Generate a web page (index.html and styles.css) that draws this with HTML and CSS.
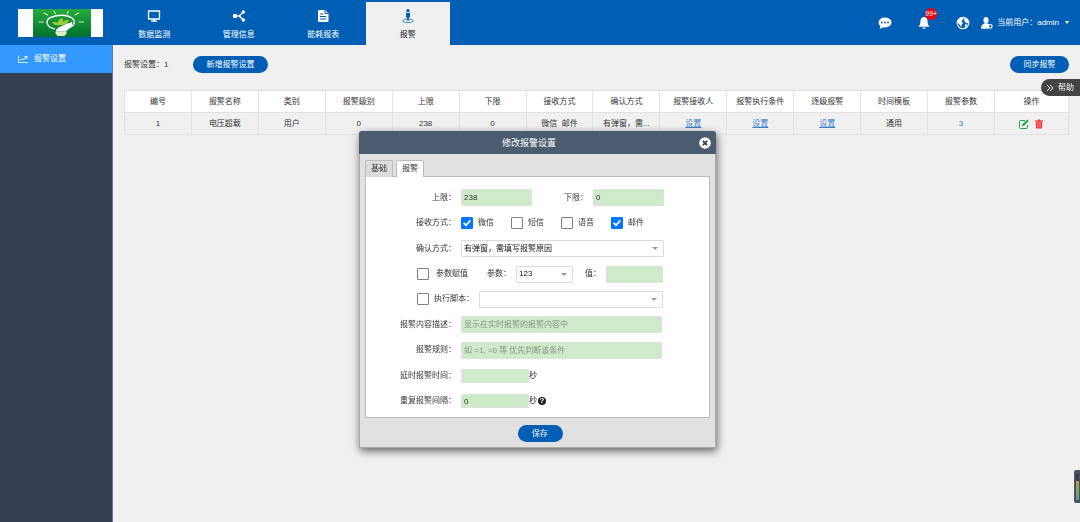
FILE: index.html
```html
<!DOCTYPE html>
<html lang="zh-CN">
<head>
<meta charset="utf-8">
<title>报警设置</title>
<link rel="stylesheet" href="styles.css">
</head>
<body>
<div class="app">
  <header class="topbar">
    <div class="brand">
      <svg class="logo" viewBox="0 0 85 28" role="img" aria-label="logo">
        <defs><linearGradient id="leafbg" x1="0" y1="0" x2="0" y2="1"><stop offset="0" stop-color="#26ac3c"/><stop offset="1" stop-color="#00702f"/></linearGradient></defs>
        <rect width="85" height="28" fill="#fff"/>
        <rect x="15" width="58" height="28" fill="url(#leafbg)"/>
        <g stroke="#d5efb8" stroke-width="1.1" stroke-linecap="round"><path d="M21 13h4.500M61 13h4.500M26 4l3.500 2M57 6l3.500-2M36 2.300l1.500 2.500M50.500 2.300l-1.500 2.500"/></g>
        <path d="M37 20C27 18 27 10 34 8c6-2.500 15-2.500 20 1 4 3 3 8-4 10" fill="none" stroke="#fff" stroke-width="1.400"/>
        <path d="M42 16c-5 1-7-1-8-3 4 0 5 0 6 1 0-3 2-4 4-5 1 2 1 3 1 4 2-2 4-2 6-2-1 3-4 5-9 5z" fill="#9fcf35"/>
        <path d="M38 22c0-2 2-3.500 5-4.500l6-3c2-.500 4-.500 5-2 1 3-1 6-4 8l-2 2H38z" fill="#fff"/>
        <path d="M37.500 22.500h11v2l-2 2.500h-7l-2-2.500z" fill="#d9f0c9"/>
      </svg>
    </div>
    <nav class="mainnav">
      <a class="navitem" href="#"><svg class="icon14" viewBox="0 0 14 14"><path d="M1.500 2h11v8h-11z" fill="none" stroke="#fff" stroke-width="1.300" stroke-linejoin="round"/><path d="M6 10h2v1.500h2v1.200H4v-1.200h2z" fill="#fff"/></svg><span>数据监测</span></a>
      <a class="navitem" href="#"><svg class="icon14" viewBox="0 0 14 14"><g fill="#fff"><circle cx="3" cy="7" r="2.200"/><circle cx="7.300" cy="7" r="1.200"/><circle cx="11.300" cy="3" r="1.700"/><circle cx="11.300" cy="11" r="1.700"/></g><path d="M3 7h4.300l4-4M7.300 7l4 4" fill="none" stroke="#fff" stroke-width="1.200"/></svg><span>管理信息</span></a>
      <a class="navitem" href="#"><svg class="icon14" viewBox="0 0 14 14"><path d="M3 1h6l3.500 3.500V12a1 1 0 0 1-1 1H3a1 1 0 0 1-1-1V2a1 1 0 0 1 1-1z" fill="#fff"/><path d="M4 5h3M4 7.500h6M4 10h6M9 1v3.500h3.500" stroke="#005eb5" fill="none"/></svg><span>能耗报表</span></a>
      <a class="navitem active" href="#"><svg class="icon14" viewBox="0 0 14 14"><circle cx="7" cy="1.800" r="1.700" fill="#005eb5"/><path d="M5 4h4v4H8.300v3.500H5.700V8H5z" fill="#005eb5"/><path d="M5 10c-5 .800-4.500 3.500 2 3.500s7-2.700 2-3.500" fill="none" stroke="#4386c5"/></svg><span>报警</span></a>
    </nav>
    <div class="tools">
      <button class="tool" aria-label="消息"><svg class="icon14" viewBox="0 0 14 14"><ellipse cx="7" cy="6.500" rx="6.500" ry="5" fill="#fff"/><path d="M3 9l-1.500 4L6 11z" fill="#fff"/><g fill="#005eb5"><circle cx="4" cy="6.500" r=".900"/><circle cx="7" cy="6.500" r=".900"/><circle cx="10" cy="6.500" r=".900"/></g></svg></button>
      <button class="tool bell" aria-label="通知"><svg class="icon14" viewBox="0 0 14 14"><path d="M7 1c2.800.300 3.600 2 3.600 4.800 0 2.500.800 3.700 2 5H1.400c1.200-1.300 2-2.300 2-5C3.400 3 4.200 1.300 7 1z" fill="#fff"/><path d="M5.500 11.400h3a1.500 1.500 0 0 1-3 0z" fill="#fff"/></svg><span class="badge">99+</span></button>
      <button class="tool" aria-label="语言"><svg class="icon14" viewBox="0 0 14 14"><circle cx="7" cy="7" r="5.800" fill="none" stroke="#fff" stroke-width="1.100"/><path d="M2 4c1-1.500 2.500-2.500 5-2.700l.8 1.200L6.500 4l-1 1.500L7 7 5.500 9v2.500L4 9 1.500 6.500zM8.500 2l3 1.500 1 3-1.500 1-2-1.500L8 4.500zM9.500 8l2 .500-1.500 3-1.500.500z" fill="#fff"/></svg></button>
      <button class="user"><svg class="icon12" viewBox="0 0 12 12"><ellipse cx="5" cy="3.200" rx="2.500" ry="3.100" fill="#fff"/><path d="M0 11.800C0 8 2 7.500 3.700 6.300h2.600C7.500 7 8 7.200 8.500 8L8 11.800z" fill="#fff"/><circle cx="9.300" cy="9.300" r="1.800" fill="#005eb5" stroke="#fff" stroke-width="1.200"/></svg><span>当前用户：admin</span><span class="caret"></span></button>
    </div>
  </header>
  <aside class="sidebar">
    <a class="sideitem" href="#"><svg class="icon10" viewBox="0 0 10 10"><path d="M.500 1.500v7H10" fill="none" stroke="#fff" stroke-width=".800"/><path d="M2 6.500l2-2 1.500 1.300L8.500 3M6.500 2.500H9V5" fill="none" stroke="#fff"/></svg><span>报警设置</span></a>
  </aside>
  <main class="content">
    <div class="actions">
      <span class="count">报警设置：1</span>
      <button class="pill wide">新增报警设置</button>
      <button class="pill sync">同步报警</button>
    </div>
    <table class="grid">
      <thead><tr><th>编号</th><th>报警名称</th><th>类别</th><th>报警级别</th><th>上限</th><th>下限</th><th>接收方式</th><th>确认方式</th><th>报警接收人</th><th>报警执行条件</th><th>逐级报警</th><th>时间模板</th><th>报警参数</th><th class="ops">操作</th></tr></thead>
      <tbody><tr><td>1</td><td>电压超载</td><td>用户</td><td>0</td><td>238</td><td>0</td><td>微信&nbsp; 邮件</td><td>有弹窗，需...</td><td><a class="link" href="#">设置</a></td><td><a class="link" href="#">设置</a></td><td><a class="link" href="#">设置</a></td><td>通用</td><td><a class="num" href="#">3</a></td>
      <td><div class="rowops"><button class="tool" aria-label="编辑"><svg class="icon10" viewBox="0 0 10 10"><path d="M6 1.500H1.500a1 1 0 0 0-1 1v6a1 1 0 0 0 1 1h6a1 1 0 0 0 1-1V6" fill="none" stroke="#22a745"/><path d="M3.500 5l4.700-4.500 1.500 1.500L5 6.800l-2 .500z" fill="#22a745"/></svg></button><button class="tool" aria-label="删除"><svg class="icon10" viewBox="0 0 10 10"><path d="M1 1.500h2.500l.500-1h2l.500 1H9v1.300H1z" fill="#f0302f"/><path d="M1.700 3.300h6.600l-.5 6.200H2.200z" fill="#f0302f"/><path d="M3.700 4v4.500M5 4v4.500M6.300 4v4.500" stroke="#fbb" stroke-width=".500"/></svg></button></div></td></tr></tbody>
    </table>
  </main>
</div>

<button class="help"><svg class="icon8" viewBox="0 0 8 8"><path d="M1 1l3 3-3 3M4 1l3 3-3 3" fill="none" stroke="#fff" stroke-width=".900"/></svg><span>帮助</span></button>
<div class="meter"><span class="meterbar"></span></div>

<section class="dialog" role="dialog" aria-labelledby="dlgtitle">
  <header class="dlghead"><h2 id="dlgtitle">修改报警设置</h2>
    <button class="tool close" aria-label="关闭"><svg class="icon12" viewBox="0 0 12 12"><circle cx="6" cy="6" r="5.800" fill="#fff"/><path d="M3.900 3.900l4.200 4.200M8.100 3.900L3.900 8.100" stroke="#33465c" stroke-width="1.900"/></svg></button>
  </header>
  <div class="dlgbody">
    <div class="tabs"><button class="tab">基础</button><button class="tab on">报警</button></div>
    <form class="form">
      <div class="row"><label class="lab" for="upper">上限：</label><input class="field short" id="upper" value="238"><label class="lab second" for="lower">下限：</label><input class="field short" id="lower" value="0"></div>
      <div class="row"><span class="lab">接收方式：</span>
        <label class="opt"><input type="checkbox" class="check" checked>微信</label>
        <label class="opt"><input type="checkbox" class="check">短信</label>
        <label class="opt"><input type="checkbox" class="check">语音</label>
        <label class="opt"><input type="checkbox" class="check" checked>邮件</label></div>
      <div class="row"><label class="lab" for="confirm">确认方式：</label><span class="pick full"><select id="confirm"><option>有弹窗，需填写报警原因</option></select></span></div>
      <div class="row indent"><label class="opt assign"><input type="checkbox" class="check">参数赋值</label><label for="param">参数：</label><span class="pick small"><select id="param"><option>123</option></select></span><label class="valuelab" for="value">值：</label><input class="field value" id="value"></div>
      <div class="row indent"><label class="opt script"><input type="checkbox" class="check" id="run">执行脚本：</label><span class="pick mid"><select aria-label="执行脚本"><option></option></select></span></div>
      <div class="row"><label class="lab" for="desc">报警内容描述：</label><input class="field long" id="desc" placeholder="显示在实时报警的报警内容中"></div>
      <div class="row"><label class="lab" for="rule">报警规则：</label><input class="field long" id="rule" placeholder="如 =1, =0 等 优先判断该条件"></div>
      <div class="row"><label class="lab" for="delay">延时报警时间：</label><input class="field time" id="delay"><span>秒</span></div>
      <div class="row"><label class="lab" for="repeat">重复报警间隔：</label><input class="field time" id="repeat" value="0"><span>秒</span><span class="tip">?</span></div>
    </form>
    <div class="dlgfoot"><button class="pill save">保存</button></div>
  </div>
</section>
</body>
</html>
```
FILE: styles.css
```css
* { box-sizing: border-box; }
body { margin: 0; background: #f0f0f0; color: #333; font: 8px/12px "Liberation Sans", "Noto Sans CJK SC", sans-serif; }
button, input, select { font: inherit; color: inherit; margin: 0; padding: 0; border: 0; background: none; }
a { color: inherit; text-decoration: none; }
svg { display: block; flex: none; }
.icon8 { width: 8px; height: 8px; }
.icon10 { width: 10px; height: 10px; }
.icon12 { width: 12px; height: 12px; }
.icon14 { width: 14px; height: 14px; }

.app { display: grid; grid-template: 45px 1fr / 113px 1fr; min-height: 100vh; }
.topbar { grid-column: 1 / -1; display: flex; background: #005eb5; color: #fff; }
.brand { width: 112px; padding: 9px 0 0 18px; }
.logo { width: 85px; height: 28px; }
.mainnav { display: flex; width: 338px; padding-top: 2px; }
.navitem { flex: 1; display: flex; flex-direction: column; align-items: center; gap: 6px; padding-top: 7px; }
.navitem.active { background: #f0f0f0; color: #222; }
.tools { flex: 1; display: flex; align-items: center; justify-content: flex-end; gap: 25px; padding-right: 11px; }
.tool { display: block; position: relative; }
.badge { position: absolute; left: 8px; top: -8px; width: 12px; height: 12px; border-radius: 6px; background: #f00014; display: flex; align-items: center; justify-content: center; font-size: 7px; }
.user { display: flex; align-items: center; gap: 4px; margin-left: -14px; }
.caret { margin-left: 2px; border: 2px solid transparent; border-top: 3px solid #fff; border-bottom: 0; }

.sidebar { background: #354052; border-right: 1px solid #67768a; }
.sideitem { display: flex; align-items: center; gap: 6px; height: 28px; padding-left: 18px; background: #39f; color: #fff; }

.content { padding: 11px 11px 0; min-width: 0; }
.actions { display: flex; align-items: center; margin-bottom: 17px; }
.count { width: 69px; }
.pill { height: 17px; border-radius: 9px; background: #005eb5; color: #fff; }
.wide { width: 75px; }
.sync { width: 59px; margin-left: auto; }
.grid { width: 100%; table-layout: fixed; border-collapse: collapse; text-align: center; }
.grid th, .grid td { height: 22px; padding: 0; border: 1px solid #e2e2e2; font-weight: 400; white-space: nowrap; }
.grid th { background: #fff; }
.ops { width: 74px; }
.link { color: #3980c8; text-decoration: underline; }
.num { color: #3980c8; }
.rowops { display: flex; justify-content: center; gap: 5px; }

.help { position: fixed; right: 0; top: 79px; display: flex; align-items: center; gap: 4px; width: 39px; height: 17px; padding-left: 5px; border-radius: 9px 0 0 9px; background: #444; color: #fff; }
.meter { position: fixed; right: 0; top: 470px; width: 6px; height: 33px; padding: 4px 1px 0 2px; border-radius: 2px 0 0 2px; background: #4d515f; }
.meterbar { display: block; height: 26px; background: linear-gradient(#343a4d 28%, #b9a24e 28%, #7fa764 65%, #4a9d95); }

.dialog { position: fixed; left: 50%; top: 131px; width: 357px; margin-left: -181px; border: 1px solid #aaa; border-top: 0; border-radius: 3px 3px 0 0; background: #e1e1e1; box-shadow: 1px 3px 9px rgba(0, 0, 0, .6); }
.dlghead { position: relative; display: flex; align-items: center; justify-content: center; height: 23px; margin: 0 -1px; padding-right: 17px; border-radius: 3px 3px 0 0; background: #4b5c6f; color: #fff; }
.dlghead h2 { margin: 0; font-size: 9px; font-weight: 400; }
.close { position: absolute; right: 5px; top: 6px; }
.dlgbody { padding: 6px 5px 0; }
.tabs { display: flex; gap: 3px; }
.tab { width: 28px; height: 17px; border: 1px solid #bbb; border-bottom: 0; border-radius: 2px 2px 0 0; background: #dcdcdc; color: #333; }
.tab.on { position: relative; background: #fff; z-index: 1; }
.form { display: grid; grid-auto-rows: 1fr; min-height: 242px; margin-top: -1px; padding: 8px 0 3px; border: 1px solid #bbb; background: #fff; }
.row { display: flex; align-items: center; }
.indent { padding-left: 51px; }
.lab { width: 90px; margin-right: 5px; text-align: right; }
.second { width: 56px; }
.field { height: 17px; padding: 0 2px; border: 1px solid #dce5db; border-radius: 1px; background: #cfeacb; }
.field::placeholder { color: #879585; opacity: 1; }
.short { width: 71px; }
.value { width: 57px; }
.long { width: 201px; }
.time { width: 68px; height: 14px; }
.opt { display: flex; align-items: center; gap: 5px; margin-right: 17px; }
.check { appearance: none; display: grid; place-items: center; width: 12px; height: 12px; border: 1px solid #808080; border-radius: 1px; background: #fff; }
.check:checked { border-color: #0075ff; background: #0075ff; }
.check:checked::before { content: ""; width: 8px; height: 8px; background: #fff; clip-path: polygon(0 54%, 16% 38%, 38% 60%, 84% 8%, 100% 24%, 38% 92%); }
.assign { gap: 7px; margin-right: 19px; }
.script { margin-right: 5px; }
.pick { position: relative; display: block; height: 17px; border: 1px solid #ddd; border-radius: 1px; background: #fff; }
.pick::after { content: ""; position: absolute; right: 5px; top: 6px; border: 3px solid transparent; border-top-color: #999; border-bottom: 0; pointer-events: none; }
.pick select { appearance: none; display: block; width: 100%; height: 15px; padding-left: 2px; color: #111; }
.full { width: 203px; }
.small { width: 57px; margin-left: 5px; }
.mid { width: 184px; }
.valuelab { margin: 0 5px 0 12px; }
.tip { width: 8px; height: 8px; margin-left: 1px; border-radius: 4px; background: #222; color: #fff; font-weight: 700; line-height: 8px; text-align: center; }
.dlgfoot { display: flex; justify-content: center; padding: 7px 0 5px 5px; }
.save { width: 45px; }
```
